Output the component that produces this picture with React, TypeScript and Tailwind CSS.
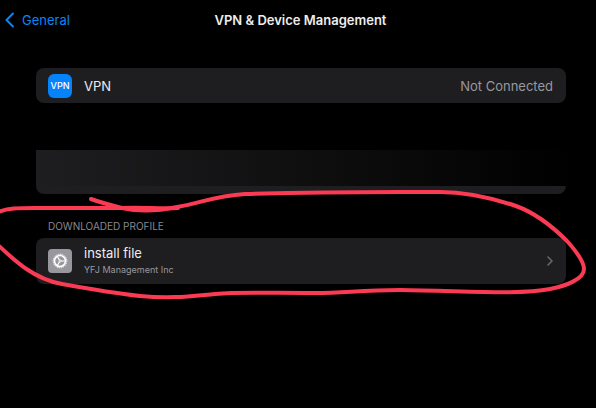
import React from 'react';

function BackChevron() {
  return (
    <svg className="h-4 w-[9px]" viewBox="0 0 9 16" fill="none" stroke="currentColor" strokeWidth="2" strokeLinecap="round" strokeLinejoin="round" aria-hidden="true">
      <path d="M8 1.5 1.5 8 8 14.5" />
    </svg>
  );
}

function GearIcon() {
  return (
    <svg className="size-4" viewBox="0 0 16 16" fill="none" stroke="currentColor" aria-hidden="true">
      <circle cx="8" cy="8" r="5.5" strokeWidth="1.6" />
      <circle cx="8" cy="8" r="6.8" strokeWidth="1" strokeDasharray="1.3 0.836" />
      <path d="M8 8h5M8 8 5.4 3.6M8 8l-2.6 4.4" strokeWidth="1.1" />
      <circle cx="8" cy="8" r="1.1" strokeWidth="0.8" fill="#98979d" />
    </svg>
  );
}

function MarkerStroke() {
  return (
    <svg
      className="pointer-events-none absolute left-0 top-0 h-[408px] w-full"
      viewBox="0 0 596 408"
      preserveAspectRatio="none"
      fill="none"
      stroke="#fb3a54"
      strokeWidth="4"
      strokeLinecap="round"
      strokeLinejoin="round"
      aria-hidden="true"
    >
      <path d="M91 199C102 203 114 206 122 208C140 212 158 211 177 207C200 203 215 196 245 194C280 193 340 192 400 192H440C468 192 492 198 516 206C538 214 554 228 567 241C576 251 584 262 584 269C584 279 566 286 550 289C520 295 470 291 400 290C355 290 342 294 305 293C270 293 240 292 215 294C192 296 172 299 140 296C112 293 84 288 62 284C34 279 15 261 -2 245" />
      <path d="M-2 212C8 208 18 208 35 208H120C145 207 158 209 178 208" />
      <path d="M124 208C137 212 157 212 170 208Z" fill="#fb3a54" strokeWidth="2" />
    </svg>
  );
}

export default function App() {
  return (
    <div className="relative min-h-screen overflow-hidden bg-black font-['Inter','Liberation_Sans',sans-serif] text-[13px] leading-4 text-[#ededee]">
      <header className="grid h-10 grid-cols-[1fr_auto_1fr] items-center pl-[5px]">
        <a href="#general" className="flex items-center gap-2 text-[#0b84f5]">
          <BackChevron />
          General
        </a>
        <h1 className="font-semibold">VPN &amp; Device Management</h1>
      </header>

      <main className="pb-8 pl-9 pr-[30px] pt-7">
        <button type="button" className="flex h-[35px] w-full items-center rounded-lg bg-[#1e1e20] pl-3 pr-[13px] text-left">
          <span className="flex size-6 items-center justify-center rounded-md bg-[#0583fb] text-[9px] font-medium text-white">VPN</span>
          <span className="ml-3 flex-1">VPN</span>
          <span className="text-[#98989f]">Not Connected</span>
        </button>

        <div className="mt-[47px] h-11 rounded-b-lg bg-[#1e1e20]">
          <div className="-mr-1 h-9 bg-linear-to-r/srgb from-[#1e1e20] to-black" />
        </div>

        <section aria-labelledby="downloaded" className="mt-6">
          <h2 id="downloaded" className="pl-3 text-[10px] leading-[17px] text-[#88888e]">DOWNLOADED PROFILE</h2>
          <button type="button" className="mt-[3px] flex h-[46px] w-full items-center rounded-lg bg-[#1e1e20] pl-3 pr-[13px] text-left">
            <span className="flex size-6 items-center justify-center rounded bg-[#98979d] text-white">
              <GearIcon />
            </span>
            <span className="ml-3 flex-1">
              <span className="block">install file</span>
              <span className="block text-[9px] leading-[17px] text-[#98989f]">YFJ Management Inc</span>
            </span>
            <svg className="h-2.5 w-1.5 text-[#68686c]" viewBox="0 0 6 10" fill="none" stroke="currentColor" strokeWidth="1.6" strokeLinecap="round" strokeLinejoin="round" aria-hidden="true">
              <path d="m1 1 4 4-4 4" />
            </svg>
          </button>
        </section>
      </main>
      <MarkerStroke />
    </div>
  );
}
